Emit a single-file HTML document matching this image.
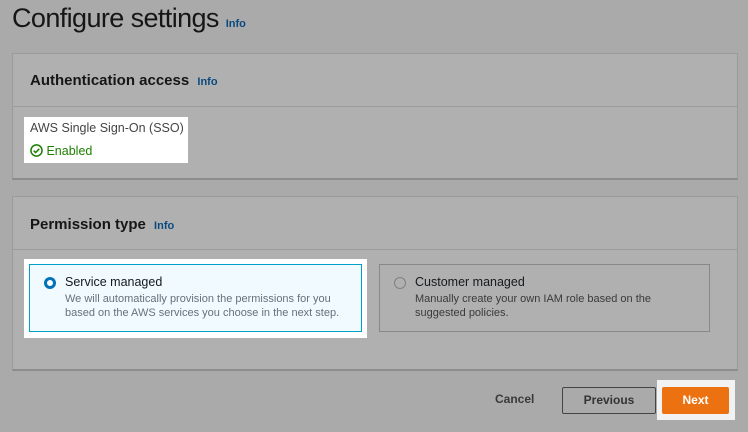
<!DOCTYPE html>
<html><head><style>
body{margin:0;width:748px;height:432px;background:#aaaaaa;font-family:"Liberation Sans",sans-serif;position:relative;overflow:hidden;color:#111}
.a{position:absolute}
.info{color:#0a4a80;font-size:11px;font-weight:bold;letter-spacing:0}
.panel{position:absolute;left:12px;width:724px;background:#b0b0b0;border:1px solid #9a9a9a;border-bottom:2px solid #8c8c8c}
.hdr{position:absolute;left:0;right:0;border-bottom:1px solid #9c9c9c}
</style></head><body>
<div class="a" style="left:12px;top:3px;font-size:27px;color:#161616;letter-spacing:-0.6px">Configure settings <span class="info">Info</span></div>

<div class="panel" style="top:53px;height:124px">
 <div class="hdr" style="top:0;height:52px"></div>
 <div class="a" style="left:17px;top:18px;font-size:15px;font-weight:bold;color:#161616">Authentication access <span class="info" style="margin-left:4px">Info</span></div>
</div>
<div class="a" style="left:24px;top:117px;width:164px;height:46px;background:#fff"></div>
<div class="a" style="left:30px;top:121px;font-size:12.5px;color:#444">AWS Single Sign-On (SSO)</div>
<div class="a" style="left:30px;top:144px;font-size:12.5px;color:#1d8102">
<svg width="13" height="13" viewBox="0 0 14 14" style="vertical-align:-2px"><circle cx="7" cy="7" r="6" fill="none" stroke="#1d8102" stroke-width="1.6"/><path d="M4 7.2l2 2 4-4" fill="none" stroke="#1d8102" stroke-width="1.6"/></svg> Enabled</div>

<div class="panel" style="top:196px;height:172px">
 <div class="hdr" style="top:0;height:52px"></div>
 <div class="a" style="left:17px;top:19px;font-size:15px;font-weight:bold;color:#161616">Permission type <span class="info" style="margin-left:4px">Info</span></div>
</div>
<div class="a" style="left:24px;top:259px;width:343px;height:79px;background:#fff"></div>
<div class="a" style="left:29px;top:264px;width:331px;height:66px;background:#f1faff;border:1px solid #00a1c9"></div>
<div class="a" style="left:44px;top:277px;width:6px;height:6px;border:3.5px solid #0073bb;border-radius:50%;background:#fff"></div>
<div class="a" style="left:65px;top:275px;font-size:12.5px;color:#16191f">Service managed</div>
<div class="a" style="left:65px;top:292px;font-size:11px;line-height:14px;color:#687078">We will automatically provision the permissions for you<br>based on the AWS services you choose in the next step.</div>

<div class="a" style="left:379px;top:264px;width:329px;height:66px;border:1px solid #888"></div>
<div class="a" style="left:394px;top:277px;width:10px;height:10px;border:1px solid #808080;border-radius:50%"></div>
<div class="a" style="left:415px;top:275px;font-size:12.5px;color:#16191f">Customer managed</div>
<div class="a" style="left:415px;top:292px;font-size:11px;line-height:14px;color:#3a3a3a">Manually create your own IAM role based on the<br>suggested policies.</div>

<div class="a" style="left:495px;top:392px;font-size:12px;font-weight:bold;color:#3a3a3a">Cancel</div>
<div class="a" style="left:562px;top:387px;width:92px;height:25px;border:1px solid #444;border-radius:2px;font-size:12px;font-weight:bold;color:#333;text-align:center;line-height:25px">Previous</div>
<div class="a" style="left:657px;top:380px;width:78px;height:40px;background:#f2f2f2"></div>
<div class="a" style="left:662px;top:387px;width:67px;height:27px;background:#ec7211;border-radius:2px;font-size:12px;font-weight:bold;color:#fff;text-align:center;line-height:27px">Next</div>
</body></html>
